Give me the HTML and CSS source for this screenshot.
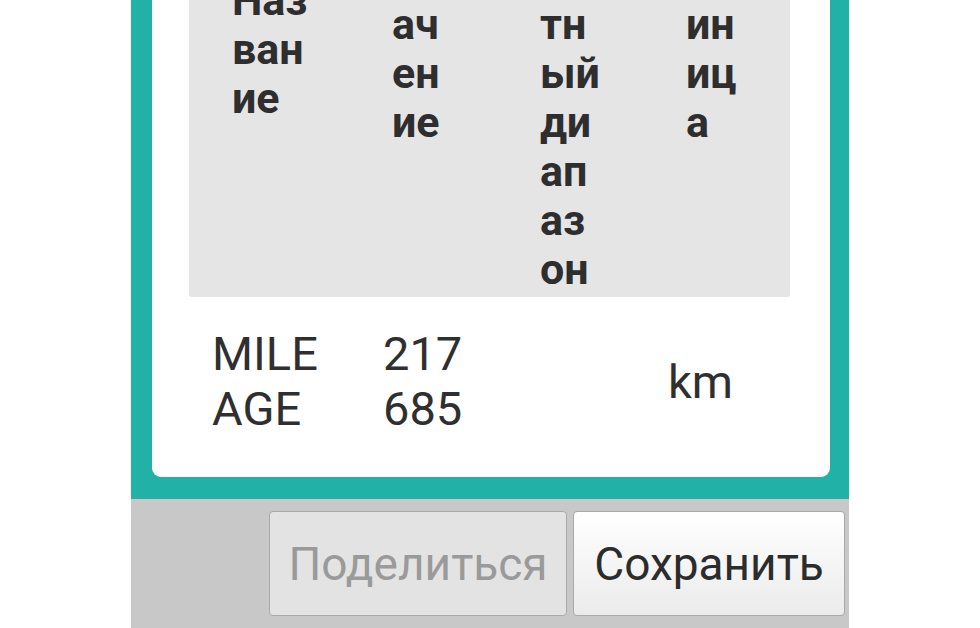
FILE: index.html
```html
<!DOCTYPE html>
<html lang="ru">
<head>
<meta charset="utf-8">
<title>Результаты</title>
<link rel="stylesheet" href="styles.css">
</head>
<body>
<div class="screen">
  <div class="panel">
    <div class="card">
      <div class="thead">
        <div class="th th-name">Наз<br>ван<br>ие</div>
        <div class="th">Зн<br>ач<br>ен<br>ие</div>
        <div class="th">Ст<br>ан<br>да<br>р<br>тн<br>ый<br>ди<br>ап<br>аз<br>он</div>
        <div class="th">Ед<br>ин<br>иц<br>а</div>
      </div>
      <div class="trow">
        <div class="td">MILE<br>AGE</div>
        <div class="td">217<br>685</div>
        <div class="td"></div>
        <div class="td">km</div>
      </div>
    </div>
  </div>
  <div class="actions">
    <button class="btn btn-disabled">Поделиться</button>
    <button class="btn btn-primary">Сохранить</button>
  </div>
</div>
</body>
</html>
```
FILE: styles.css
```css
html, body {
  margin: 0;
  padding: 0;
  background: #ffffff;
  font-family: Roboto, "Noto Sans", "DejaVu Sans", sans-serif;
}

.screen {
  width: 718px;
  height: 628px;
  margin-left: 131px;
  display: flex;
  flex-direction: column;
  overflow: hidden;
}

.panel {
  height: 499px;
  flex: none;
  background: #21b1a6;
  padding: 0 19px 22px 21px;
  box-sizing: border-box;
  display: flex;
  flex-direction: column;
  justify-content: flex-end;
  overflow: hidden;
}

.card {
  background: #ffffff;
  border-radius: 0 0 9px 9px;
  padding: 0 40px 0 37px;
}

.thead {
  display: grid;
  grid-template-columns: 160px 148px 146px 146px;
  align-items: center;
  background: #e6e5e6;
  border-radius: 0 0 3px 3px;
  padding-bottom: 3px;
}

.th {
  padding-left: 43px;
  font-weight: 700;
  font-size: 43px;
  line-height: 49px;
  color: #2e2e2e;
  white-space: nowrap;
}

.trow {
  display: grid;
  grid-template-columns: 171px 150px 135px 144px;
  align-items: center;
  padding: 29px 0 41px;
}

.td {
  padding-left: 23px;
  font-size: 47px;
  line-height: 55px;
  color: #2f2f2f;
  white-space: nowrap;
}

.actions {
  flex: 1;
  background: #c8c8c8;
  display: flex;
  justify-content: flex-end;
  align-items: flex-start;
  gap: 6px;
  padding: 12px 4px 0 0;
}

.btn {
  height: 105px;
  box-sizing: border-box;
  border: 1px solid #a9a9a9;
  border-radius: 4px;
  font-family: Roboto, "Noto Sans", sans-serif;
  font-size: 46px;
  padding: 0;
  margin: 0;
}

.btn-disabled {
  width: 298px;
  background: #e3e3e3;
  color: #9a9a9a;
}

.btn-primary {
  width: 272px;
  background: linear-gradient(#ffffff, #ebebeb);
  color: #2c2c2c;
}
```
